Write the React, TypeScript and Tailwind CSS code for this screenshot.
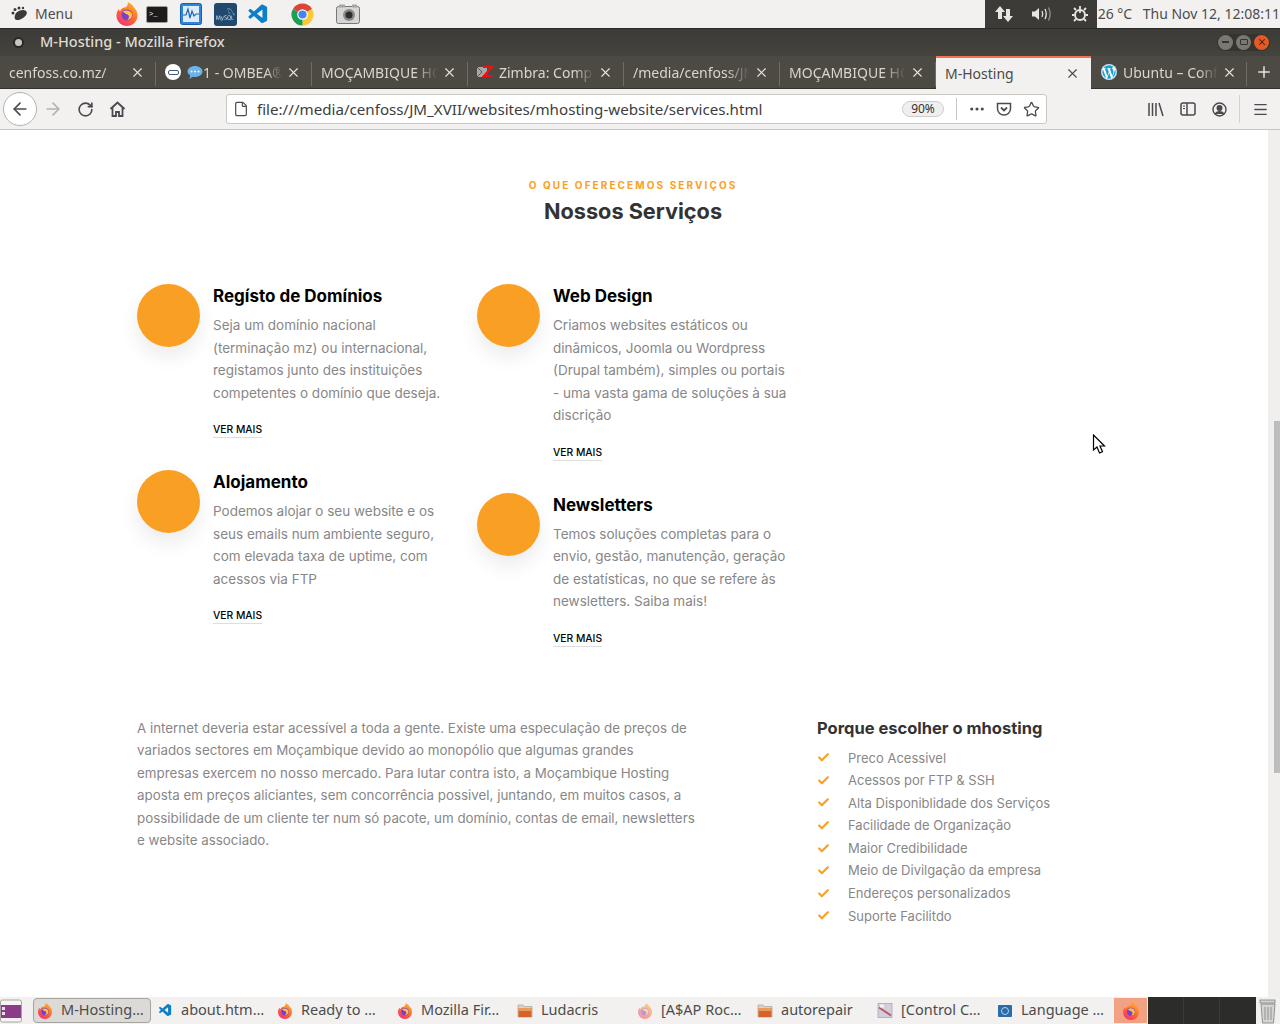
import { ArrowLeft, ArrowRight, Check, File, Menu, MoreHorizontal, Plus, RotateCw, Star, X } from "lucide-react"
import { FaWordpress } from "react-icons/fa"
import { SiMysql } from "react-icons/si"
import { VscVscode } from "react-icons/vsc"

const tabs = [
  { title: "cenfoss.co.mz/", icon: "" },
  { title: "1 - OMBEA®", icon: "ombea" },
  { title: "MOÇAMBIQUE HOSTING", icon: "" },
  { title: "Zimbra: Compose", icon: "zimbra" },
  { title: "/media/cenfoss/JM_XVII", icon: "" },
  { title: "MOÇAMBIQUE HOSTING", icon: "" },
]

const leftCards = [
  {
    title: "Regísto de Domínios",
    lines: ["Seja um domínio nacional", "(terminação mz) ou internacional,", "registamos junto des instituições", "competentes o domínio que deseja."],
  },
  {
    title: "Alojamento",
    lines: ["Podemos alojar o seu website e os", "seus emails num ambiente seguro,", "com elevada taxa de uptime, com", "acessos via FTP"],
  },
]

const rightCards = [
  {
    title: "Web Design",
    lines: ["Criamos websites estáticos ou", "dinâmicos, Joomla ou Wordpress", "(Drupal também), simples ou portais", "- uma vasta gama de soluções à sua", "discrição"],
  },
  {
    title: "Newsletters",
    lines: ["Temos soluções completas para o", "envio, gestão, manutenção, geração", "de estatísticas, no que se refere às", "newsletters. Saiba mais!"],
  },
]

const reasons = [
  "Preco Acessivel",
  "Acessos por FTP & SSH",
  "Alta Disponiblidade dos Serviços",
  "Facilidade de Organização",
  "Maior Credibilidade",
  "Meio de Divilgação da empresa",
  "Endereços personalizados",
  "Suporte Facilitdo",
]

const paragraph = [
  "A internet deveria estar acessível a toda a gente. Existe uma especulação de preços de",
  "variados sectores em Moçambique devido ao monopólio que algumas grandes",
  "empresas exercem no nosso mercado. Para lutar contra isto, a Moçambique Hosting",
  "aposta em preços aliciantes, sem concorrência possivel, juntando, em muitos casos, a",
  "possibilidade de um cliente ter num só pacote, um domínio, contas de email, newsletters",
  "e website associado.",
]

const taskItems = [
  { label: "M-Hosting…", icon: "firefox", active: true },
  { label: "about.htm…", icon: "vscode" },
  { label: "Ready to …", icon: "firefox" },
  { label: "Mozilla Fir…", icon: "firefox" },
  { label: "Ludacris", icon: "folder" },
  { label: "[A$AP Roc…", icon: "firefoxPale" },
  { label: "autorepair", icon: "folder" },
  { label: "[Control C…", icon: "control" },
  { label: "Language …", icon: "language" },
]

function FirefoxIcon({ size = 16, pale = false }: { size?: number; pale?: boolean }) {
  return (
    <svg width={size} height={size} viewBox="0 0 24 24" className={pale ? "opacity-50" : ""}>
      <defs>
        <linearGradient id="ffBody" x1="0.800" y1="0" x2="0.200" y2="1">
          <stop offset="0" stopColor="#ffb52e" />
          <stop offset="0.500" stopColor="#ff6a2b" />
          <stop offset="1" stopColor="#f0307a" />
        </linearGradient>
      </defs>
      <path d="M1.500 13.500c0-3 1-5 2.500-6.500 0 1 .5 1.800 1 2.300C6 6.500 8.500 5.300 11 5.200c1.300-1.500 2-3 2-5 3 1.300 5 3.300 6 5.300 2.200 2 3.500 4.800 3.500 8 0 5.800-4.700 10.500-10.500 10.500S1.500 19.300 1.500 13.500z" fill="url(#ffBody)" />
      <circle cx="12" cy="13" r="5.500" fill="#7b3fd0" />
      <path d="M8 9.500c3-2 7.500-1.200 8.800 2 1.200 3.200-1.300 6.500-4.800 6.500 2-1.200 2.600-3.500 1.300-5-1.300-1.200-3.900-1.200-5.300-3.500z" fill="#ffc23f" />
    </svg>
  )
}

function FolderIcon() {
  return (
    <svg width="16" height="16" viewBox="0 0 16 16">
      <path d="M1 2h5l1 1.500h8V14H1z" fill="#d8d4cc" stroke="#9a958c" strokeWidth="0.600" />
      <rect x="1.500" y="5" width="13" height="9" fill="#d4622a" />
      <rect x="1.500" y="5" width="13" height="3" fill="#e99a5c" />
    </svg>
  )
}

function TaskIcon({ name }: { name: string }) {
  if (name === "firefox") return <FirefoxIcon />
  if (name === "firefoxPale") return <FirefoxIcon pale />
  if (name === "vscode") return <VscVscode size={15} color="#0a7fcb" />
  if (name === "folder") return <FolderIcon />
  if (name === "control") {
    return (
      <svg width="17" height="17" viewBox="0 0 16 16">
        <rect x="1" y="1" width="14" height="14" fill="#d6cddc" stroke="#9c92a6" strokeWidth="0.600" />
        <path d="M2 5l12 8" stroke="#b05a68" strokeWidth="2" />
        <rect x="3" y="2" width="4" height="3" fill="#f4f2f0" />
      </svg>
    )
  }
  return (
    <svg width="16" height="16" viewBox="0 0 16 16">
      <rect x="1" y="2" width="14" height="12" rx="1" fill="#2a6ca8" />
      <circle cx="8" cy="8" r="3.500" fill="none" stroke="#b5d3ea" strokeWidth="1" />
    </svg>
  )
}

function TopPanel() {
  return (
    <div className="flex h-[28px] items-center bg-[#f2f1f0] text-[14px] text-[#4c4c4c]">
      <svg width="18" height="16" viewBox="0 0 18 16" className="ml-[10px]">
        <path d="M6 7c3-3 8-4 10-2s0 5-3 7-7 3-8 1 0-4 1-6z" fill="#3a3a38" />
        <circle cx="3" cy="7" r="1.500" fill="#3a3a38" />
        <circle cx="5" cy="3.500" r="1.500" fill="#3a3a38" />
        <circle cx="9" cy="2" r="1.500" fill="#3a3a38" />
        <circle cx="13" cy="2" r="1.200" fill="#3a3a38" />
      </svg>
      <span className="ml-[7px] -mt-[1px] w-[80px]">Menu</span>
      <div className="flex w-[31px]"><FirefoxIcon size={24} /></div>
      <div className="flex h-[17px] w-[22px] items-center rounded-[2px] border border-[#9a9a9a] bg-[#1c1c1c] pl-[2px] font-['Liberation_Mono',monospace] text-[7px] text-white">
        {">_"}
      </div>
      <svg width="22" height="22" viewBox="0 0 22 22" className="ml-[12px]">
        <rect x="0.500" y="0.500" width="21" height="21" rx="2" fill="#2d86dc" stroke="#1c5fa8" />
        <rect x="3" y="3" width="16" height="16" fill="#dcecfb" />
        <path d="M3 12h3l2-6 2 9 2-7 2 5 2-2h3" fill="none" stroke="#2166b0" strokeWidth="1.200" />
      </svg>
      <div className="ml-[12px] flex h-[23px] w-[23px] items-center justify-center rounded-[3px] bg-[#21496e]">
        <SiMysql size={19} color="#c5d6e4" />
      </div>
      <div className="ml-[10px]"><VscVscode size={23} color="#0a7fcb" /></div>
      <svg width="23" height="23" viewBox="0 0 24 24" className="ml-[21px]">
        <path d="M12 12 2.040 6.250A11.500 11.500 0 0 1 21.960 6.250z" fill="#db4437" />
        <path d="M12 12 21.960 6.250A11.500 11.500 0 0 1 12 23.500z" fill="#fcc934" />
        <path d="M12 12 12 23.500A11.500 11.500 0 0 1 2.040 6.250z" fill="#1e9e50" />
        <circle cx="12" cy="12" r="5.500" fill="#fff" />
        <circle cx="12" cy="12" r="4.300" fill="#4285f4" />
      </svg>
      <svg width="24" height="22" viewBox="0 0 24 22" className="ml-[22px]">
        <rect x="0.500" y="3.500" width="23" height="17" rx="2" fill="#d6d6d4" stroke="#77777a" />
        <rect x="3" y="1.500" width="6" height="3" fill="#a5a5a3" />
        <rect x="16" y="1.500" width="5" height="3" fill="#a5a5a3" />
        <circle cx="13" cy="12" r="6" fill="#8a8a8a" />
        <circle cx="13" cy="12" r="3.500" fill="#2e2e2e" />
      </svg>
      <div className="ml-auto flex h-full w-[112px] items-center bg-[#3c3b37] text-[#e6e6e3]">
        <svg width="20" height="18" viewBox="0 0 20 18" className="ml-[9px]" fill="currentColor">
          <path d="M6 1 1 7h3v7h4V7h3zM14 17l5-6h-3V4h-4v7H9z" />
        </svg>
        <svg width="22" height="16" viewBox="0 0 22 16" className="ml-[17px]" fill="none" stroke="currentColor">
          <path d="M1 5.500h3L8 2v12l-4-3.500H1z" fill="currentColor" stroke="none" />
          <path d="M11 5c1 2 1 4 0 6M14 3c1.500 3 1.500 7 0 10" strokeWidth="1.300" />
          <path d="M17.500 1.500c2 4 2 9 0 13" strokeWidth="1.300" opacity="0.500" />
        </svg>
        <svg width="18" height="18" viewBox="0 0 18 18" className="ml-[18px]" fill="none" stroke="currentColor" strokeWidth="2">
          <circle cx="9" cy="10" r="5" />
          <path d="M9 1v7M3 3l2 2M15 3l-2 2M1 10h2M15 10h2M3 16l2-2M15 16l-2-2" strokeWidth="1.800" />
        </svg>
      </div>
      <span className="-mt-[1px] w-[45px] pl-[1px]">26 °C</span>
      <span className="-mt-[1px] whitespace-nowrap pl-[1px]">Thu Nov 12, 12:08:11</span>
    </div>
  )
}

function TitleBar() {
  return (
    <div className="flex h-[28px] items-center border-t border-[#2b2a27] bg-gradient-to-b from-[#3c3b37] to-[#45433d] pb-[1px] pl-[15px] text-[14.500px] font-medium text-[#dfdbd2]">
      <span className="h-[7px] w-[7px] rounded-full bg-[#c8c6c0] shadow-[0_0_0_2px_#2a2925]" />
      <span className="ml-[18px]">M-Hosting - Mozilla Firefox</span>
      <div className="ml-auto mr-[10px] flex items-center gap-[3px] rounded-full bg-[#35342f] p-[1px]">
        <span className="flex h-[15px] w-[15px] items-center justify-center rounded-full bg-[#7a7870]">
          <span className="h-[1.5px] w-[7px] bg-[#35342f]" />
        </span>
        <span className="flex h-[15px] w-[15px] items-center justify-center rounded-full bg-[#7a7870]">
          <span className="h-[6px] w-[8px] rounded-[1px] border border-[#35342f]" />
        </span>
        <span className="flex h-[15px] w-[15px] items-center justify-center rounded-full bg-[#e25a26] text-[#4a1c08]">
          <X size={10} strokeWidth={2.5} />
        </span>
      </div>
    </div>
  )
}

function TabIcon({ name }: { name: string }) {
  if (name === "ombea") {
    return (
      <>
        <span className="mr-[6px] flex h-[16px] w-[16px] shrink-0 items-center justify-center rounded-full bg-white">
          <span className="h-[5px] w-[11px] rounded-[2px] border border-[#44597a]" />
        </span>
        <svg width="16" height="15" viewBox="0 0 16 15" className="shrink-0">
          <path d="M8 1c4 0 7.500 2.400 7.500 5.500S12 12 8 12c-.8 0-1.500-.1-2.200-.3L2.500 14l.7-3.600C1.500 9.400.500 8 .500 6.500.500 3.400 4 1 8 1z" fill="#6db3e8" />
          <circle cx="4.500" cy="6.500" r="1" fill="#fff" />
          <circle cx="8" cy="6.500" r="1" fill="#fff" />
          <circle cx="11.500" cy="6.500" r="1" fill="#fff" />
        </svg>
      </>
    )
  }
  if (name === "zimbra") {
    return (
      <svg width="16" height="16" viewBox="0 0 16 16" className="mr-[6px] shrink-0">
        <rect x="0" y="3" width="10" height="10" fill="#a8a8a8" />
        <path d="M0 3l5 5-5 5" fill="none" stroke="#555" />
        <path d="M6 3h9l-8 9h8" fill="none" stroke="#f01010" strokeWidth="2.200" />
      </svg>
    )
  }
  return null
}

function TabStrip() {
  return (
    <div className="flex h-[33px] border-b border-[#33312c] bg-[#4c4a43] text-[14px] text-[#d9d6cf]">
      {tabs.map((tab, index) => (
        <div key={index} className="relative flex h-full w-[156px] items-center pl-[9px] pr-[11px]">
          <TabIcon name={tab.icon} />
          <span className="min-w-0 flex-1 overflow-hidden whitespace-nowrap [mask-image:linear-gradient(to_right,black_80%,transparent)]">{tab.title}</span>
          <X size={15} strokeWidth={1.800} className="ml-[4px] shrink-0 text-[#e6e4df]" />
          <span className="absolute right-0 top-[6px] h-[24px] w-px bg-[#6f6d66]" />
        </div>
      ))}
      <div className="-mb-px flex h-[33px] w-[155px] items-center border-t-2 border-[#f0754a] bg-[#f2f1f0] pl-[9px] pr-[11px] text-[#4a4a48]">
        <span className="flex-1">M-Hosting</span>
        <X size={15} strokeWidth={1.800} className="text-[#4a4a48]" />
      </div>
      <div className="relative flex h-full w-[156px] items-center pl-[10px] pr-[10px]">
        <span className="mr-[6px] flex h-[16px] w-[16px] shrink-0 items-center justify-center rounded-full bg-white">
          <FaWordpress size={16} color="#1d9ed1" />
        </span>
        <span className="min-w-0 flex-1 overflow-hidden whitespace-nowrap [mask-image:linear-gradient(to_right,black_80%,transparent)]">Ubuntu – Configure</span>
        <X size={15} strokeWidth={1.800} className="ml-[4px] shrink-0 text-[#e6e4df]" />
        <span className="absolute right-0 top-[6px] h-[24px] w-px bg-[#6f6d66]" />
      </div>
      <div className="flex flex-1 items-center justify-center">
        <Plus size={18} strokeWidth={2} className="text-[#e6e4df]" />
      </div>
    </div>
  )
}

function Toolbar() {
  const iconClass = "text-[#4a4a4f]"
  return (
    <div className="flex h-[41px] items-center border-b border-[#c8c6c3] bg-[#f2f1f0] text-[#4a4a4f]">
      <div className="ml-[3px] flex h-[34px] w-[34px] items-center justify-center rounded-full border border-[#b5b3b0] bg-white">
        <ArrowLeft size={20} strokeWidth={2} className={iconClass} />
      </div>
      <ArrowRight size={20} strokeWidth={2} className="ml-[6px] text-[#b4b3b1]" />
      <RotateCw size={17} strokeWidth={2.300} className={`ml-[14px] ${iconClass}`} />
      <svg width="17" height="16" viewBox="0 0 17 16" className="ml-[15px]" fill="none" stroke="currentColor" strokeWidth="2">
        <path d="M1.500 8 8.500 1.500 15.500 8" />
        <path d="M3.500 7v8h3.500v-4h3v4h3.500V7" strokeWidth="1.800" />
      </svg>
      <div className="ml-[100px] flex h-[30px] w-[821px] items-center rounded-[3px] border border-[#c9c7c4] bg-white pl-[6px] pr-[6px]">
        <File size={16} strokeWidth={1.800} className={iconClass} />
        <span className="ml-[8px] flex-1 whitespace-nowrap text-[15.150px] text-[#3d3d40]">file:///media/cenfoss/JM_XVII/websites/mhosting-website/services.html</span>
        <span className="flex h-[16px] w-[42px] items-center justify-center rounded-full border border-[#cfcdca] bg-[#f0efee] text-[12px] text-[#333]">90%</span>
        <span className="ml-[12px] h-[22px] w-px bg-[#c9c7c4]" />
        <MoreHorizontal size={18} strokeWidth={2.200} className={`ml-[11px] ${iconClass}`} />
        <svg width="16" height="15" viewBox="0 0 16 15" className="ml-[10px]" fill="none" stroke="currentColor" strokeWidth="1.500">
          <path d="M1.500 1.500h13v5c0 4-3 6.500-6.500 6.500S1.500 10.500 1.500 6.500z" />
          <path d="M5 5.500l3 3 3-3" strokeWidth="1.800" />
        </svg>
        <Star size={17} strokeWidth={1.800} className={`ml-[11px] ${iconClass}`} />
      </div>
      <svg width="16" height="15" viewBox="0 0 16 15" className="ml-[101px]" fill="none" stroke="currentColor" strokeWidth="1.500">
        <path d="M1 1v13M4.500 1v13M8 1v13M11 1l4 13" />
      </svg>
      <svg width="16" height="14" viewBox="0 0 16 14" className="ml-[16px]" fill="none" stroke="currentColor" strokeWidth="1.500">
        <rect x="1" y="1" width="14" height="12" rx="2" />
        <path d="M7 1v12" />
        <path d="M3 4h2M3 6.500h2" strokeWidth="1" />
      </svg>
      <svg width="15" height="15" viewBox="0 0 15 15" className="ml-[16px]" fill="none" stroke="currentColor" strokeWidth="1.400">
        <circle cx="7.500" cy="7.500" r="6.500" />
        <circle cx="7.500" cy="6" r="2.300" fill="currentColor" />
        <path d="M3.500 12c1-3 7-3 8 0" fill="currentColor" />
      </svg>
      <span className="ml-[12px] h-[28px] w-px bg-[#d4d2cf]" />
      <Menu size={17} strokeWidth={1.800} className={`ml-[12px] ${iconClass}`} />
    </div>
  )
}

function ServiceCard({ title, lines }: { title: string; lines: string[] }) {
  return (
    <div className="flex items-start">
      <div className="h-[63px] w-[63px] shrink-0 rounded-full bg-[#f9a024] shadow-[0_10px_20px_rgba(0,0,0,0.08)]" />
      <div className="ml-[13px]">
        <h3 className="mt-[1px] text-[17px] font-bold leading-[22px] text-black">{title}</h3>
        <div className="mt-[7px] text-[13.500px] leading-[22.500px] text-[#878787]">
          {lines.map((line) => (
            <p key={line} className="whitespace-nowrap">{line}</p>
          ))}
        </div>
        <a className="mt-[18px] inline-block border-b border-[#dddddd] pb-[1px] text-[10.300px] font-medium leading-[14px] text-black">VER MAIS</a>
      </div>
    </div>
  )
}

function Content() {
  return (
    <div className="flex h-[867px] bg-white font-['Inter',sans-serif]">
      <div className="relative flex-1 overflow-hidden">
        <div className="pr-[2px] pt-[49px] text-center">
          <p className="text-[10px] font-bold leading-[12px] tracking-[2.100px] text-[#f9a024]">O QUE OFERECEMOS SERVIÇOS</p>
          <h2 className="mt-[5px] text-[21.700px] font-bold leading-[30px] text-[#333333]">Nossos Serviços</h2>
        </div>
        <div className="ml-[137px] mt-[58px] flex">
          <div className="flex w-[340px] flex-col gap-[31px]">
            {leftCards.map((card) => (
              <ServiceCard key={card.title} {...card} />
            ))}
          </div>
          <div className="flex w-[340px] flex-col gap-[31px]">
            {rightCards.map((card) => (
              <ServiceCard key={card.title} {...card} />
            ))}
          </div>
        </div>
        <div className="ml-[137px] mt-[69px] flex">
          <div className="w-[680px] text-[13.350px] leading-[22.600px] text-[#878787]">
            {paragraph.map((line) => (
              <p key={line} className="whitespace-nowrap">{line}</p>
            ))}
          </div>
          <div className="-mt-[1px]">
            <h4 className="text-[16.500px] font-bold leading-[24px] text-[#333333]">Porque escolher o mhosting</h4>
            <ul className="mt-[7px] text-[13px] leading-[22.600px] text-[#878787]">
              {reasons.map((reason) => (
                <li key={reason} className="flex items-center whitespace-nowrap">
                  <Check size={13} strokeWidth={4} className="mr-[18px] text-[#f9a024]" />
                  {reason}
                </li>
              ))}
            </ul>
          </div>
        </div>
        <svg width="14" height="21" viewBox="0 0 14 21" className="absolute left-[1092px] top-[304px]">
          <path d="M1.500 1v15l3.500-3 2.500 6 3-1.300-2.500-5.700h4.500z" fill="#fff" stroke="#000" strokeWidth="1.200" />
        </svg>
      </div>
      <div className="w-[12px] bg-[#f0efee] pl-[6px] pt-[291px]">
        <div className="h-[352px] w-[6px] bg-[#bdbdbd]" />
      </div>
    </div>
  )
}

function Taskbar() {
  return (
    <div className="flex h-[27px] items-center bg-[#f2f1f0] text-[14.500px] text-[#4c4c4c]">
      <svg width="22" height="24" viewBox="0 0 22 24" className="shrink-0">
        <rect x="0.500" y="1" width="21" height="22" rx="2" fill="#f6f5f3" stroke="#a8a6a2" />
        <rect x="1" y="6" width="20" height="13" fill="#8a3c88" />
        <rect x="2" y="8" width="3" height="3" fill="#f0d8ee" />
        <rect x="2" y="13" width="3" height="3" fill="#f0d8ee" />
      </svg>
      <div className="ml-[11px] flex">
        {taskItems.map((item) => (
          <div
            key={item.label}
            className={
              item.active
                ? "mr-[2px] flex h-[25px] w-[118px] items-center rounded-[4px] border border-[#a5a3a0] bg-[#dcdad7] pl-[3px]"
                : "flex h-[25px] w-[120px] items-center pl-[4px]"
            }
          >
            <span className="flex w-[16px] shrink-0 justify-center"><TaskIcon name={item.icon} /></span>
            <span className="ml-[8px] -mt-[2px] whitespace-nowrap">{item.label}</span>
          </div>
        ))}
      </div>
      <div className="flex h-[27px] w-[35px] items-center justify-center border border-[#f2f1f0] bg-[#f3a183]">
        <FirefoxIcon size={18} />
      </div>
      <div className="flex h-full w-[108px] bg-[#2c2c2a]">
        <span className="h-full w-[36px] border-r border-[#3a3a38]" />
        <span className="h-full w-[36px] border-r border-[#3a3a38]" />
      </div>
      <svg width="20" height="26" viewBox="0 0 20 26" className="ml-[2px]" fill="#d4d4d2" stroke="#7f7f7d" strokeWidth="0.800">
        <rect x="2" y="2" width="15" height="3" />
        <path d="M3 6h14l-1.500 19h-11z" />
        <path d="M7 9v13M10 9v13M13 9v13" />
      </svg>
    </div>
  )
}

export default function App() {
  return (
    <div className="h-[1024px] w-[1280px] overflow-hidden font-['Noto_Sans',sans-serif]">
      <TopPanel />
      <TitleBar />
      <TabStrip />
      <Toolbar />
      <Content />
      <Taskbar />
    </div>
  )
}
